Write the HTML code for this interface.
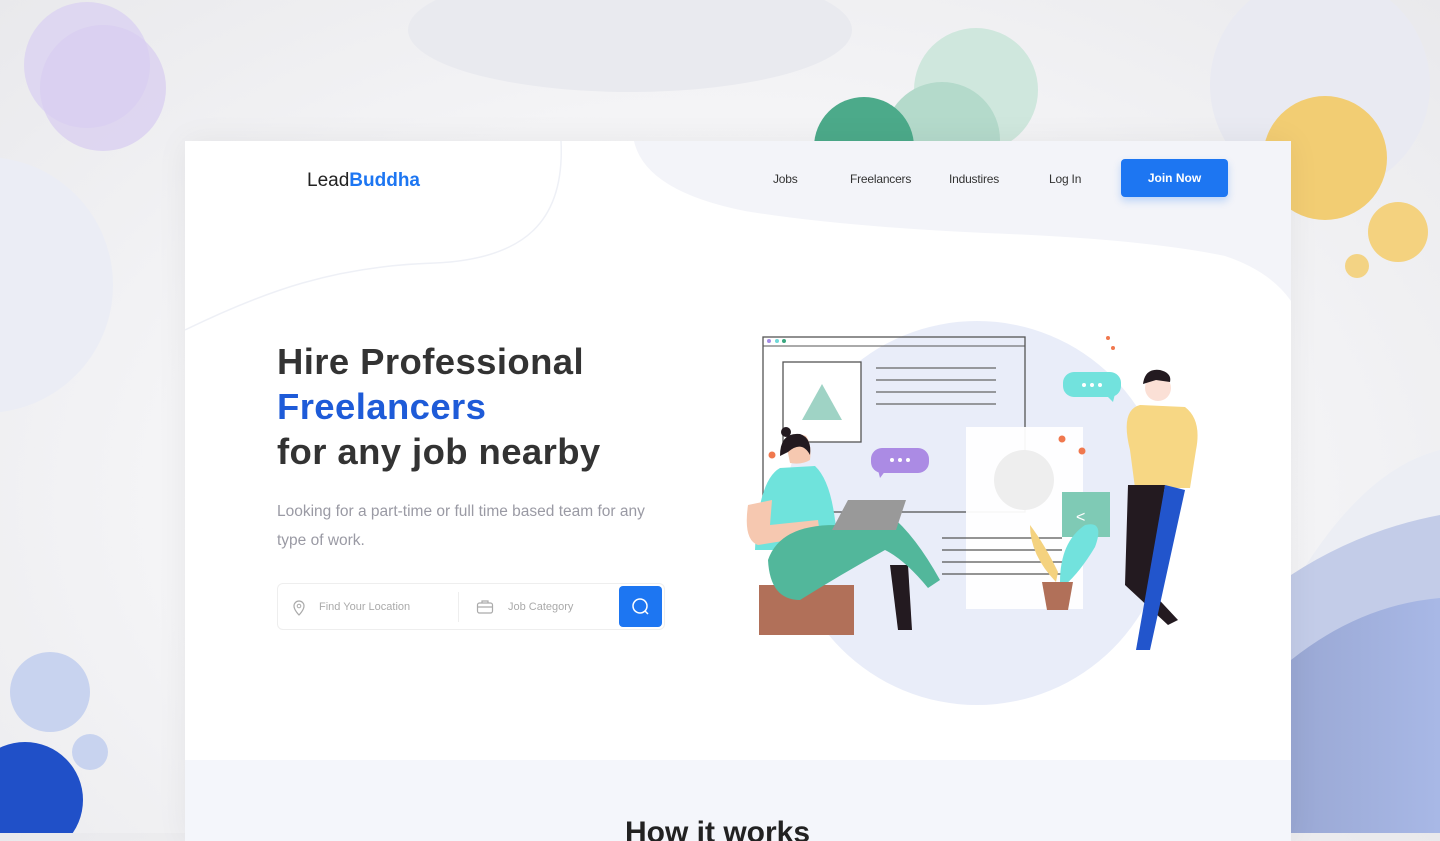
<!DOCTYPE html>
<html><head><meta charset="utf-8"><style>
*{margin:0;padding:0;box-sizing:border-box}
body{width:1440px;height:833px;overflow:hidden;position:relative;font-family:"Liberation Sans",sans-serif;background:radial-gradient(ellipse at 50% 60%,#fbfbfc 0%,#f4f4f6 55%,#e9e9ec 100%)}
.bg{position:absolute;left:0;top:0}
.card{position:absolute;left:185px;top:141px;width:1106px;height:700px;background:#fff;overflow:hidden;box-shadow:0 0 30px rgba(0,0,0,.06)}
.nav a{position:absolute;font-size:12px;color:#333;top:31px;letter-spacing:-.2px}
.logo{position:absolute;left:122px;top:29px;font-size:19px;color:#222}
.logo b{color:#1d76f2;font-weight:bold}
.btn{position:absolute;left:936px;top:18px;width:107px;height:38px;background:#1d76f2;border-radius:4px;color:#fff;font-size:12px;font-weight:bold;text-align:center;line-height:38px;box-shadow:0 4px 8px rgba(29,118,242,.25)}
h1{position:absolute;left:92px;top:198px;font-size:36.5px;line-height:45px;color:#333;font-weight:bold;letter-spacing:.4px}
h1 span{color:#1e5bd8}
p.sub{position:absolute;left:92px;top:356px;font-size:15.5px;line-height:29px;color:#9a9aa4;width:378px}
.search{position:absolute;left:92px;top:442px;width:388px;height:47px;border:1px solid #eee;border-radius:6px;background:#fff}
.search .t{position:absolute;top:17px;font-size:11px;color:#aaa}
.sbtn{position:absolute;right:2px;top:2px;width:43px;height:41px;background:#1d76f2;border-radius:4px}
.bottom{position:absolute;left:0;top:619px;width:1106px;height:100px;background:#f4f6fb}
.bottom h2{position:absolute;left:440px;top:56px;font-size:30px;color:#222;font-weight:bold}
</style></head><body>
<svg class="bg" width="1440" height="833">
<defs><linearGradient id="g1" x1="0" x2="1"><stop offset="0" stop-color="#9aa8d4"/><stop offset="1" stop-color="#a8b8e6"/></linearGradient></defs>
<ellipse cx="630" cy="30" rx="222" ry="62" fill="#e9eaef"/>
<circle cx="87" cy="65" r="63" fill="#ddd5f1" opacity=".9"/>
<circle cx="103" cy="88" r="63" fill="#d8cdf0" opacity=".75"/>
<circle cx="-15" cy="285" r="128" fill="#ebedf5"/>
<circle cx="1320" cy="85" r="110" fill="#e9eaf2"/>
<circle cx="976" cy="90" r="62" fill="#cfe7dd"/>
<circle cx="942" cy="140" r="58" fill="#b4dacb"/>
<circle cx="864" cy="147" r="50" fill="#4caa8a"/>
<circle cx="1325" cy="158" r="62" fill="#f2cd73"/>
<circle cx="1398" cy="232" r="30" fill="#f4d27f"/>
<circle cx="1357" cy="266" r="12" fill="#f3d384"/>
<path d="M1291 590 Q1360 470 1440 450 L1440 833 L1291 833Z" fill="#eceef4"/>
<path d="M1291 575 Q1360 530 1440 515 L1440 833 L1291 833Z" fill="#c3cce8"/>
<path d="M1291 660 Q1360 605 1440 598 L1440 833 L1291 833Z" fill="url(#g1)"/>
<circle cx="50" cy="692" r="40" fill="#c8d3ef"/>
<circle cx="90" cy="752" r="18" fill="#c8d3ef"/>
<circle cx="25" cy="800" r="58" fill="#2050c8"/>
</svg>
<div class="card">
<svg style="position:absolute;left:0;top:0" width="1106" height="619">
<path d="M449 0 Q460 50 560 70 Q650 85 800 92 Q960 98 1040 115 Q1085 130 1106 160 L1106 0Z" fill="#f3f4f9"/>
<path d="M376 0 C380 80 340 118 250 122 C150 125 80 150 0 189" fill="none" stroke="#eef0f6" stroke-width="1.5"/>
<g transform="translate(555,179)">
<circle cx="237" cy="193" r="192" fill="#e9edf9"/>
<rect x="23" y="17" width="262" height="175" fill="none" stroke="#555" stroke-width="1.3"/>
<line x1="23" y1="26" x2="285" y2="26" stroke="#555" stroke-width="1"/>
<circle cx="29" cy="21" r="2" fill="#a48ce6"/><circle cx="37" cy="21" r="2" fill="#6fd8d8"/><circle cx="44" cy="21" r="2" fill="#3aa77f"/>
<rect x="43" y="42" width="78" height="80" fill="#fff" stroke="#555" stroke-width="1.3"/>
<polygon points="82,64 62,100 102,100" fill="#9fd3c5"/>
<g stroke="#666" stroke-width="1.3"><line x1="136" y1="48" x2="256" y2="48"/><line x1="136" y1="60" x2="256" y2="60"/><line x1="136" y1="72" x2="256" y2="72"/><line x1="136" y1="84" x2="256" y2="84"/></g>
<rect x="226" y="107" width="117" height="182" fill="#fff" opacity=".95"/>
<circle cx="284" cy="160" r="30" fill="#eeeeee"/>
<rect x="322" y="172" width="48" height="45" fill="#7fcab5"/>
<text x="336" y="202" fill="#fff" font-size="16" font-family="Liberation Sans">&lt;</text>
<g stroke="#555" stroke-width="1.2"><line x1="202" y1="218" x2="322" y2="218"/><line x1="202" y1="230" x2="322" y2="230"/><line x1="202" y1="242" x2="322" y2="242"/><line x1="202" y1="254" x2="322" y2="254"/></g>
<rect x="131" y="128" width="58" height="25" rx="11" fill="#ab8be4"/><polygon points="138,150 146,150 140,158" fill="#ab8be4"/>
<g fill="#fff"><circle cx="152" cy="140" r="2"/><circle cx="160" cy="140" r="2"/><circle cx="168" cy="140" r="2"/></g>
<rect x="323" y="52" width="58" height="25" rx="11" fill="#72e2dd"/><polygon points="365,74 375,74 373,82" fill="#72e2dd"/>
<g fill="#fff"><circle cx="344" cy="65" r="2"/><circle cx="352" cy="65" r="2"/><circle cx="360" cy="65" r="2"/></g>
<g fill="#f0784e"><circle cx="32" cy="135" r="3.5"/><circle cx="322" cy="119" r="3.5"/><circle cx="342" cy="131" r="3.5"/><circle cx="368" cy="18" r="2"/><circle cx="373" cy="28" r="2"/></g>
<rect x="19" y="265" width="95" height="50" fill="#b17059"/>
<path d="M150 245 L158 310 L172 310 L168 245Z" fill="#231a20"/>
<path d="M15 230 Q18 160 40 148 L75 146 Q90 160 95 200 L100 230Z" fill="#6fe3dc"/>
<path d="M8 185 Q3 220 18 225 L80 215 L78 200 L30 205 L32 180Z" fill="#f6c8b0"/>
<path d="M28 240 Q40 205 95 205 L150 195 Q175 215 200 260 L188 268 Q165 240 145 230 Q100 255 60 280 Q30 280 28 240Z" fill="#52b79b"/>
<path d="M92 210 L108 180 L166 180 L156 210Z" fill="#999"/>
<path d="M47 128 Q52 110 66 116 Q72 124 70 140 Q62 145 50 143Z" fill="#f6c8b0"/>
<path d="M40 136 Q40 112 60 114 Q72 118 70 135 Q62 120 48 132Z" fill="#231a20"/><circle cx="46" cy="112" r="5" fill="#231a20"/>
<path d="M390 130 Q380 90 400 85 L445 87 Q462 100 456 130 L450 168 L395 168Z" fill="#f7d784"/>
<circle cx="418" cy="68" r="13" fill="#fbe0d6"/>
<path d="M403 64 Q405 48 420 50 Q432 53 430 62 L416 60Z" fill="#231a20"/>
<path d="M388 165 L425 165 L410 270 L438 300 L428 305 L385 265Z" fill="#231a20"/>
<path d="M425 165 L445 170 L410 330 L396 330Z" fill="#2255cc"/>
<path d="M316 262 Q290 235 290 205 Q305 225 318 252Z" fill="#f4d27f"/>
<path d="M320 262 Q320 222 345 205 Q365 200 355 227 Q340 252 325 265Z" fill="#72e2dd"/>
<path d="M302 262 L333 262 L328 290 L307 290Z" fill="#b17059"/>
</g>
</svg>
<div class="logo">Lead<b>Buddha</b></div>
<div class="nav"><a style="left:588px">Jobs</a><a style="left:665px">Freelancers</a><a style="left:764px">Industires</a><a style="left:864px">Log In</a></div>
<div class="btn">Join Now</div>
<h1>Hire Professional<br><span>Freelancers</span><br>for any job nearby</h1>
<p class="sub">Looking for a part-time or full time based team for any type of work.</p>
<div class="search">
<svg style="position:absolute;left:14px;top:16px" width="14" height="16"><path d="M7 1a5 5 0 0 1 5 5c0 4-5 9-5 9S2 10 2 6a5 5 0 0 1 5-5z" fill="none" stroke="#aaa" stroke-width="1.2"/><circle cx="7" cy="6" r="1.8" fill="none" stroke="#aaa"/></svg>
<span class="t" style="left:41px">Find Your Location</span>
<div style="position:absolute;left:180px;top:8px;width:1px;height:30px;background:#eee"></div>
<svg style="position:absolute;left:198px;top:15px" width="18" height="16"><rect x="1.5" y="4" width="15" height="10" rx="2" fill="none" stroke="#aaa" stroke-width="1.2"/><path d="M6 4V2h6v2M1.5 8h15" fill="none" stroke="#aaa" stroke-width="1.2"/></svg>
<span class="t" style="left:230px">Job Category</span>
<div class="sbtn"><svg width="43" height="41"><circle cx="21" cy="20" r="7" fill="none" stroke="#fff" stroke-width="1.5"/><line x1="26" y1="25" x2="29" y2="28" stroke="#fff" stroke-width="1.5"/></svg></div>
</div>
<div class="bottom"><h2>How it works</h2></div>
</div>
</body></html>
